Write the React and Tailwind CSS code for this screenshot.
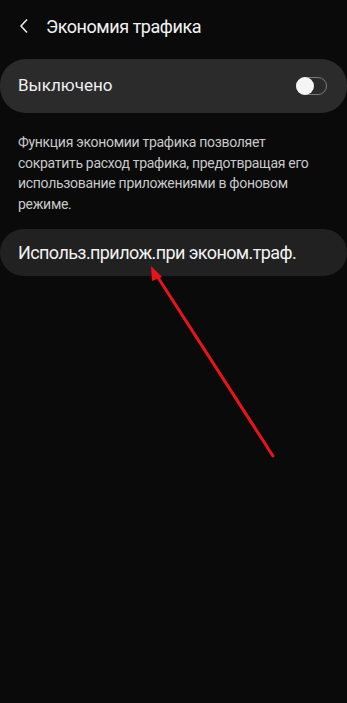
import React from 'react';

export default function App() {
  return (
    <div
      className="relative w-[347px] h-[703px] bg-[#0a0a0a] overflow-hidden text-white"
      style={{ fontFamily: 'Roboto, "Noto Sans", sans-serif' }}
    >
      {/* шапка */}
      <div className="h-[52px] flex items-center pl-[19px]">
        <svg width="11" height="16" viewBox="0 0 11 16" className="mr-[16px]">
          <path d="M8 1.5 L2 8 L8 14.5" fill="none" stroke="#e8e8e8" strokeWidth="1.6" />
        </svg>
        <span className="text-[18px] text-[#f2f2f2] tracking-[-0.45px]">Экономия трафика</span>
      </div>

      <div className="mt-[7px] h-[54px] rounded-[26px] bg-[#2b2b2b] flex items-center justify-between pl-[18px] pr-[20px]">
        <span className="text-[17px] text-[#f0f0f0]">Выключено</span>
        <div className="relative w-[31px] h-[18px] rounded-full border border-[#7a7a7a]">
          <div className="absolute -left-[1px] -top-[1px] w-[18px] h-[18px] rounded-full bg-[#f5f5f5]" />
        </div>
      </div>

      <p className="mt-[19px] px-[18px] text-[14px] leading-[20.5px] tracking-[-0.3px] text-[#c8c8c8]">
        Функция экономии трафика позволяет сократить расход трафика, предотвращая его использование приложениями в фоновом режиме.
      </p>

      <div className="mt-[15px] h-[47px] rounded-[24px] bg-[#212121] flex items-center pl-[18px]">
        <span className="text-[18px] text-[#f2f2f2] tracking-[-0.6px]">Использ.прилож.при эконом.траф.</span>
      </div>

      {/* стрелка */}
      <svg className="absolute left-0 top-0" width="347" height="703" viewBox="0 0 347 703">
        <line x1="273" y1="456" x2="157" y2="276" stroke="#e8141c" strokeWidth="3" strokeLinecap="round" />
        <polygon points="151,266 162,277 152,281" fill="#e8141c" />
      </svg>
    </div>
  );
}
